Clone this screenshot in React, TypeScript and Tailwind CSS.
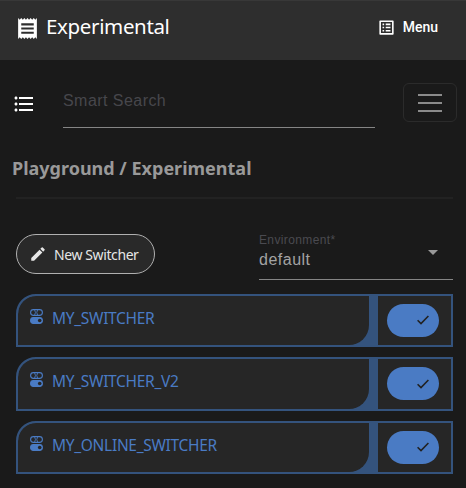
import { MdReceipt, MdListAlt, MdFormatListBulleted, MdEdit } from "react-icons/md";

function SwitcherIcon() {
  return (
    <svg className="h-[15px] w-[13px] shrink-0" viewBox="0 0 13 15" fill="none" stroke="#4a7bc4">
      <rect x="0.6" y="0.6" width="11.8" height="5.8" rx="2.9" strokeWidth="1.1" />
      <path d="M4.6 0.9Q6.3 3.5 4.6 6.1M7.6 0.9Q5.9 3.5 7.6 6.1" strokeWidth="0.9" />
      <rect x="0.6" y="8.6" width="11.8" height="5.8" rx="2.9" fill="#4a7bc4" strokeWidth="1.1" />
      <circle cx="9.7" cy="11.5" r="1.8" fill="#262626" stroke="none" />
    </svg>
  );
}

function SwitcherRow({ name }: { name: string }) {
  return (
    <div className="flex h-[53.5px] overflow-hidden rounded-tl-[20px] border-2 border-[#34537d] bg-[#34537d]">
      <div className="flex w-[351px] items-start gap-[9px] rounded-br-[20px] rounded-tl-[18px] bg-[#262626] pl-3 pt-[13px]">
        <SwitcherIcon />
        <span className="-mt-[1px] whitespace-nowrap text-[15.5px] leading-[20px] tracking-[-0.3px] text-[#4a7bc4]">{name}</span>
      </div>
      <div className="ml-[9px] flex flex-1 items-center bg-[#262626] pl-[9px]">
        <div className="flex h-[33px] w-[52px] items-center justify-end rounded-full bg-[#4a7bc4] pr-[10px]">
          <svg className="h-[10px] w-[12px]" viewBox="0 0 12 10" fill="none" stroke="#222" strokeWidth="1.6">
            <path d="M0.6 5.2L4 8.6L11.4 1" />
          </svg>
        </div>
      </div>
    </div>
  );
}

export default function App() {
  return (
    <div className="h-[488px] w-[466px] overflow-hidden bg-[#1a1a1a] font-['Noto_Sans',sans-serif]">
      <header className="flex h-[60px] items-center justify-between border-t border-[#383838] bg-[#2e2e2e] pl-[15px] pr-[28px] text-white">
        <div className="flex items-center gap-[6px] pb-[7px]">
          <MdReceipt className="mt-[2px] size-[25px]" />
          <h1 className="-mt-[3px] text-[20.5px] leading-[30px] tracking-[-0.35px]">Experimental</h1>
        </div>
        <div className="flex items-center gap-[7px] pb-[6px]">
          <MdListAlt className="size-[19px]" />
          <span className="font-[Roboto,sans-serif] text-[14px] font-medium">Menu</span>
        </div>
      </header>
      <div className="flex h-[68px] items-end justify-between pl-3 pr-[9px]">
        <MdFormatListBulleted className="mb-[12px] size-[24px] text-white" />
        <div className="ml-[27px] h-[41px] w-[312px] border-b border-[#858585] font-['Liberation_Sans',sans-serif] text-[16px] leading-[28px] tracking-[0.45px] text-[#47474c]">Smart Search</div>
        <div className="mb-[6px] ml-auto flex h-[39px] w-[54px] flex-col items-center justify-center gap-[6px] rounded-[6px] border border-[#2b2b2b]">
          <i className="h-[2px] w-6 bg-[#8b8b8b]" />
          <i className="h-[2px] w-6 bg-[#8b8b8b]" />
          <i className="h-[2px] w-6 bg-[#8b8b8b]" />
        </div>
      </div>
      <h2 className="mx-3 mt-[27px] h-[42px] text-[18px] font-bold leading-[27px] text-[#999]">Playground / Experimental</h2>
      <main className="ml-4 mr-[13px] border-t-2 border-[#222]">
        <div className="flex h-[94.5px] items-start justify-between pt-[35px]">
          <button className="flex h-10 w-[139px] items-center gap-[7px] rounded-full border border-[#b0b0b0] bg-[#292929] pl-[12px] text-[14px] tracking-[-0.4px] text-[#e6e6e6]">
            <MdEdit className="size-[18px]" />
            <span className="whitespace-nowrap">New Switcher</span>
          </button>
          <div className="flex h-[46px] w-[194px] justify-between border-b border-[#858585] font-['Liberation_Sans',sans-serif]">
            <div>
              <div className="h-[13px] text-[12px] leading-[12px] tracking-[0.37px] text-[#4a4a50]">Environment*</div>
              <div className="text-[16px] leading-[26px] tracking-[0.5px] text-[#a3a3a3]">default</div>
            </div>
            <svg className="mr-[15px] mt-[16px] h-[5px] w-[10px]" viewBox="0 0 10 5" fill="#999"><path d="M0 0h10L5 5z" /></svg>
          </div>
        </div>
        <div className="flex flex-col gap-[10px]">
          <SwitcherRow name="MY_SWITCHER" />
          <SwitcherRow name="MY_SWITCHER_V2" />
          <SwitcherRow name="MY_ONLINE_SWITCHER" />
        </div>
      </main>
    </div>
  );
}
